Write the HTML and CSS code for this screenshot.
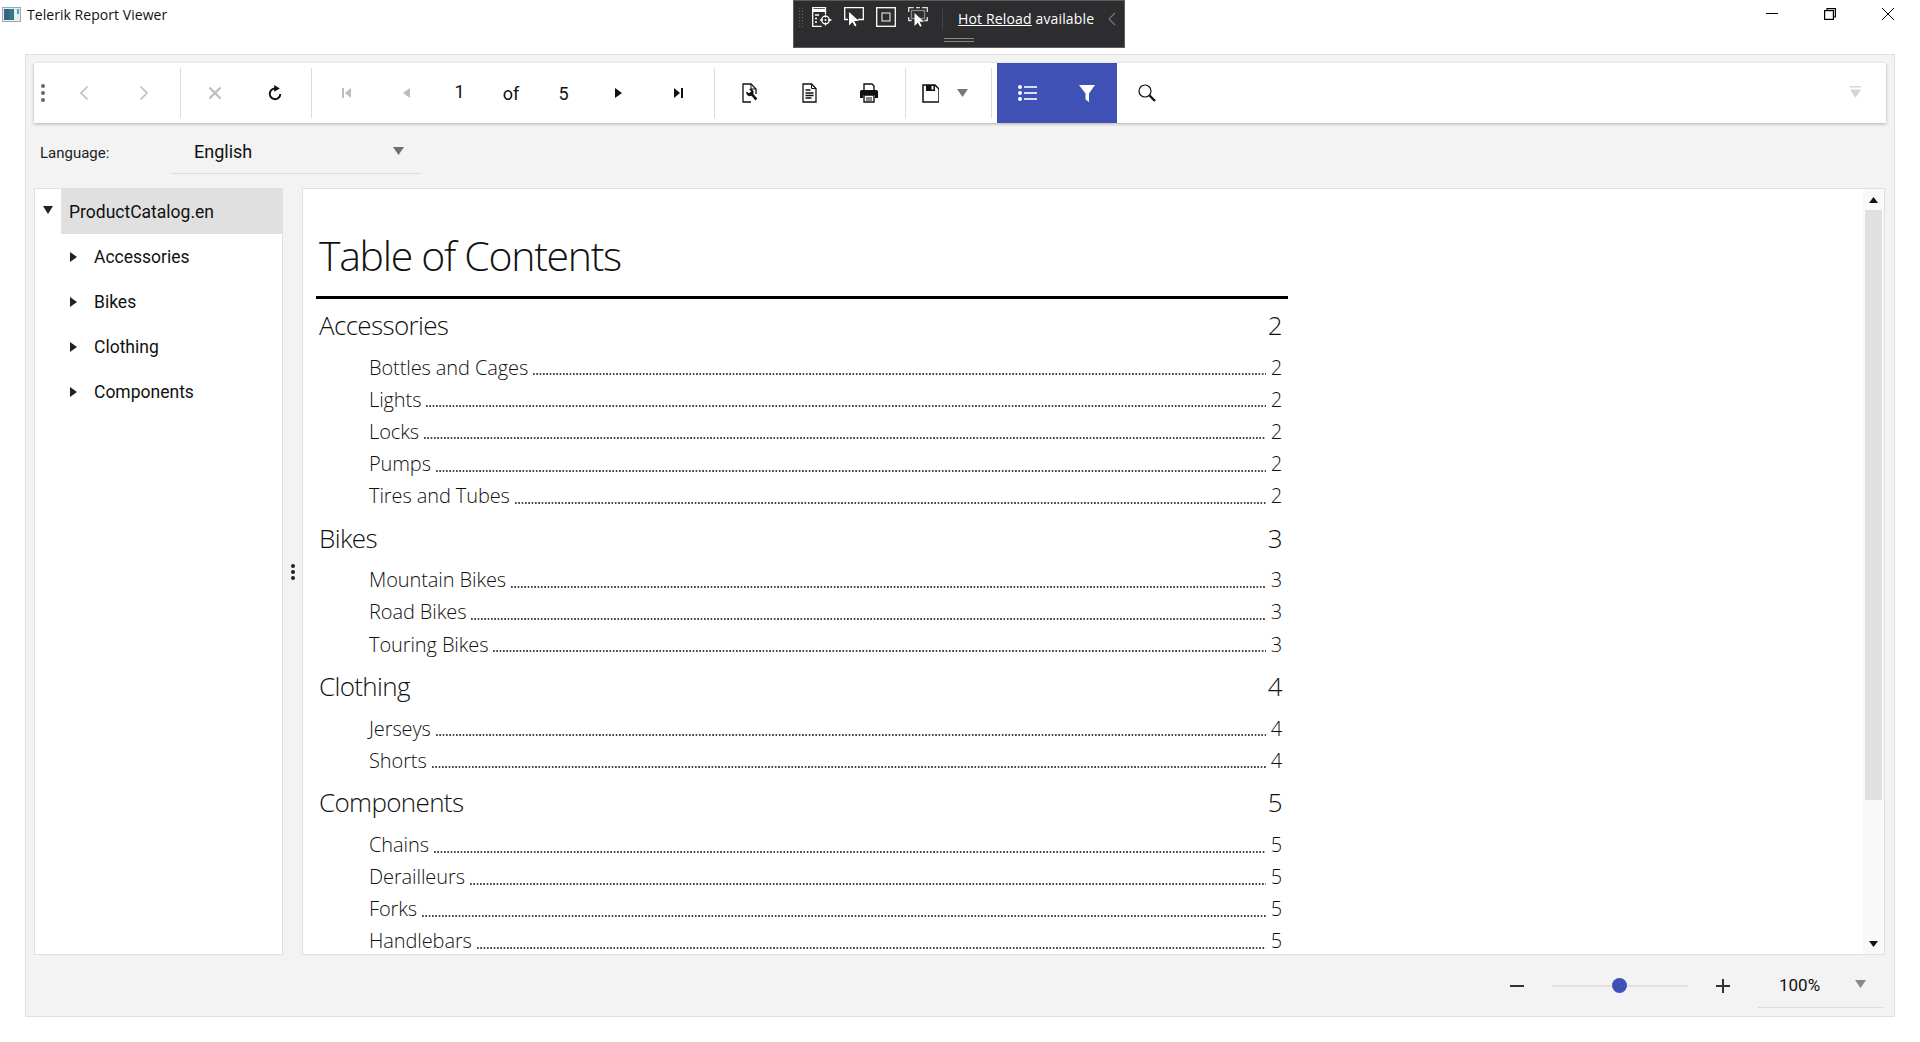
FILE: index.html
```html
<!DOCTYPE html>
<html lang="en">
<head>
<meta charset="utf-8">
<title>Telerik Report Viewer</title>
<link rel="stylesheet" href="styles.css">
</head>
<body>
<div class="app">
  <header class="titlebar">
    <svg class="app-icon" width="19" height="15" viewBox="0 0 19 15"><rect x=".5" y=".5" width="18" height="14" fill="#e8eef2" stroke="#9aa7b0"/><rect x="2" y="2" width="10" height="11" fill="#2f7d7a"/><rect x="2" y="2" width="5" height="11" fill="#3a5f8c"/><rect x="15" y="2" width="2" height="5" fill="#4aa3b8"/></svg>
    <span class="app-title">Telerik Report Viewer</span>
    <div class="hot-reload">
      <span class="hr-grip"></span>
      <svg class="hr-icon" width="20" height="20" viewBox="0 0 20 20" fill="none" stroke="#fff" stroke-width="1.3"><path d="M13.5 7V.7H.7v18.6h9"/><path d="M.7 3.5h12.8" stroke-width="3"/><path d="M3 8h4M3 11.5h2M3 15h2"/><circle cx="13.5" cy="13" r="3.8"/><circle cx="13.5" cy="13" r="1" fill="#fff" stroke="none"/><path d="M13.5 7.5v3M13.5 15.5v3M8 13h3M16 13h3.5"/></svg>
      <svg class="hr-icon" width="20" height="20" viewBox="0 0 20 20" fill="none" stroke="#fff" stroke-width="1.3"><path d="M4 12.5H.7V.7h18.6v11.8H14"/><path d="M5 5l0 13.5 3.5-3.5 2.5 4.5 1.5-1-2.3-4.5h4.8z" fill="#fff" stroke="none"/></svg>
      <svg class="hr-icon" width="20" height="20" viewBox="0 0 20 20" fill="none" stroke="#fff" stroke-width="1.3"><rect x=".7" y=".7" width="18.6" height="18.6"/><rect x="6" y="6" width="8" height="8" stroke="#ccc"/></svg>
      <svg class="hr-icon" width="20" height="20" viewBox="0 0 20 20" fill="none" stroke="#ddd" stroke-width="1.3"><path d="M.7 5V.7h5M14 .7h5.300V5M.7 10v3.500h3M19.300 10v3.500h-3M8 .7h4"/><rect x="3.500" y="3.500" width="13" height="8" stroke="#888"/><path d="M6.500 6l0 13 3.300-3.300 2.400 4 1.500-.9-2.200-4h4.500z" fill="#fff" stroke="none"/></svg>
      <span class="hr-sep"></span>
      <span class="hr-text"><u>Hot Reload</u> available</span>
      <svg class="hr-chevron" width="8" height="14" viewBox="0 0 8 14" fill="none" stroke="#777" stroke-width="1.2"><path d="M7 1L1 7l6 6"/></svg>
      <span class="hr-handle"></span>
    </div>
    <div class="win-controls">
      <svg width="12" height="12" viewBox="0 0 12 12" fill="none" stroke="#000"><path d="M0 5.500h12"/></svg>
      <svg width="12" height="12" viewBox="0 0 12 12" fill="none" stroke="#000" stroke-width="1.2"><rect x=".6" y="2.600" width="8.800" height="8.800"/><path d="M3 2.600V.6h8.400v8.400H9.400"/></svg>
      <svg width="12" height="12" viewBox="0 0 12 12" fill="none" stroke="#000"><path d="M0 0l12 12M12 0L0 12"/></svg>
    </div>
  </header>

  <main class="panel">
    <nav class="toolbar">
      <span class="tb-grip"><i></i><i></i><i></i></span>
      <span class="tb-btn"><svg width="10" height="16" viewBox="0 0 10 16" fill="none" stroke="#bdbdbd" stroke-width="1.6"><path d="M8.500 1.500L2 8l6.500 6.500"/></svg></span>
      <span class="tb-btn"><svg width="10" height="16" viewBox="0 0 10 16" fill="none" stroke="#bdbdbd" stroke-width="1.6"><path d="M1.500 1.500L8 8l-6.500 6.500"/></svg></span>
      <span class="tb-sep"></span>
      <span class="tb-btn"><svg width="14" height="14" viewBox="0 0 14 14" fill="none" stroke="#bdbdbd" stroke-width="2.2"><path d="M1.500 1.500l11 11M12.500 1.500l-11 11"/></svg></span>
      <span class="tb-btn"><svg width="14" height="16" viewBox="0 0 14 16" fill="none" stroke="#111" stroke-width="2"><path d="M9.500 4.200A5.300 5.300 0 1 0 12.300 9"/><path d="M6.200 0l5.600 3.600-5.600 3.200z" fill="#111" stroke="none"/></svg></span>
      <span class="tb-sep"></span>
      <span class="tb-btn"><svg width="9" height="10" viewBox="0 0 9 10" fill="#bdbdbd"><rect width="2" height="10"/><path d="M9 0v10L3 5z"/></svg></span>
      <span class="tb-btn"><svg width="7" height="10" viewBox="0 0 7 10" fill="#bdbdbd"><path d="M7 0v10L0 5z"/></svg></span>
      <span class="page-nav"><span class="pn-current">1</span><span>of</span><span>5</span></span>
      <span class="tb-btn"><svg width="7" height="10" viewBox="0 0 7 10" fill="#111"><path d="M0 0v10l7-5z"/></svg></span>
      <span class="tb-btn"><svg width="9" height="10" viewBox="0 0 9 10" fill="#111"><path d="M0 0v10l6-5z"/><rect x="7" width="2" height="10"/></svg></span>
      <span class="tb-sep"></span>
      <span class="tb-btn"><svg width="18" height="20" viewBox="-2 0 18 20" fill="none" stroke="#111" stroke-width="1.3"><path d="M9 19H1V1h8l5 5v5"/><path d="M9 1v5h5" stroke-width="1"/><path d="M4.500 8.500a3.600 3.600 0 0 0 5 4.300l4 4.600 1.800-1.800-4-4.600a3.600 3.600 0 0 0-4.300-5l2.300 2.300-2.200 2z" fill="#111" stroke="none"/></svg></span>
      <span class="tb-btn"><svg width="15" height="20" viewBox="0 0 15 20" fill="none" stroke="#111" stroke-width="1.3"><path d="M1 1h8.500L14 5.500V19H1z"/><path d="M9.500 1v4.500H14" stroke-width="1"/><path d="M3.500 7h5M3.500 10h8M3.500 12.500h8M3.500 15h6"/></svg></span>
      <span class="tb-btn"><svg width="18" height="20" viewBox="0 0 18 20" fill="none"><path d="M4 7V1h8l2 2v4" stroke="#111" stroke-width="1.400"/><path d="M0 8.500a1.500 1.500 0 0 1 1.500-1.500h15A1.500 1.500 0 0 1 18 8.500V15h-3v-3H3v3H0z" fill="#111"/><path d="M4 12h10v7H4z" stroke="#111" stroke-width="1.400"/><path d="M6 15h6M6 17h6" stroke="#111"/></svg></span>
      <span class="tb-sep"></span>
      <span class="tb-btn tb-save"><svg width="18" height="19" viewBox="-1 0 18 19" fill="none"><path d="M1 1h12l4 4v13H1z" stroke="#111" stroke-width="1.500"/><path d="M4 1h9v6H4z" fill="#111"/><rect x="9.500" y="2" width="2" height="3.500" fill="#fff"/></svg></span>
      <span class="tb-drop"><svg width="11" height="8" viewBox="0 0 11 8" fill="#777"><path d="M0 0h11L5.500 8z"/></svg></span>
      <span class="tb-sep tb-sep-wide"></span>
      <span class="tb-active">
        <span class="tb-btn"><svg width="19" height="16" viewBox="0 0 19 16" fill="#fff"><circle cx="2" cy="2" r="2"/><circle cx="2" cy="8" r="2"/><circle cx="2" cy="14" r="2"/><rect x="6" y="1.200" width="13" height="1.600"/><rect x="6" y="7.200" width="13" height="1.600"/><rect x="6" y="13.200" width="13" height="1.600"/></svg></span>
        <span class="tb-btn"><svg width="16" height="17" viewBox="0 0 16 17" fill="#fff"><path d="M0 0h16l-6 8.500V17l-3.500-2.500v-6z"/></svg></span>
      </span>
      <span class="tb-btn"><svg width="18" height="18" viewBox="0 0 18 18" fill="none" stroke="#111"><circle cx="7" cy="7" r="6" stroke-width="1.200"/><path d="M11.500 11.500l5.500 5.500" stroke-width="2.400"/></svg></span>
      <span class="tb-overflow"><svg width="11" height="12" viewBox="0 0 11 12" fill="#d5d5d5"><rect width="11" height="1.500"/><path d="M0 3.500h11L5.500 12z"/></svg></span>
    </nav>

    <div class="param-row">
      <label class="param-label">Language:</label>
      <div class="select"><span>English</span><svg width="11" height="8" viewBox="0 0 11 8" fill="#6f6f6f"><path d="M0 0h11L5.500 8z"/></svg></div>
    </div>

    <div class="workspace">
      <aside class="tree">
        <div class="tree-root"><span class="caret caret-root"><svg width="10" height="8" viewBox="0 0 10 8" fill="#222"><path d="M0 0h10L5 8z"/></svg></span><span class="tree-selected">ProductCatalog.en</span></div>
        <div class="tree-node"><span class="caret"><svg width="7" height="10" viewBox="0 0 7 10" fill="#222"><path d="M0 0v10l7-5z"/></svg></span><span class="tree-label">Accessories</span></div>
        <div class="tree-node"><span class="caret"><svg width="7" height="10" viewBox="0 0 7 10" fill="#222"><path d="M0 0v10l7-5z"/></svg></span><span class="tree-label">Bikes</span></div>
        <div class="tree-node"><span class="caret"><svg width="7" height="10" viewBox="0 0 7 10" fill="#222"><path d="M0 0v10l7-5z"/></svg></span><span class="tree-label">Clothing</span></div>
        <div class="tree-node"><span class="caret"><svg width="7" height="10" viewBox="0 0 7 10" fill="#222"><path d="M0 0v10l7-5z"/></svg></span><span class="tree-label">Components</span></div>
      </aside>
      <div class="splitter"><i></i><i></i><i></i></div>
      <section class="report">
        <div class="report-page">
          <div class="toc">
            <h1 class="toc-title">Table of Contents</h1>
            <div class="toc-section"><span>Accessories</span><span>2</span></div>
            <div class="toc-item"><span>Bottles and Cages</span><i></i><span>2</span></div>
            <div class="toc-item"><span>Lights</span><i></i><span>2</span></div>
            <div class="toc-item"><span>Locks</span><i></i><span>2</span></div>
            <div class="toc-item"><span>Pumps</span><i></i><span>2</span></div>
            <div class="toc-item"><span>Tires and Tubes</span><i></i><span>2</span></div>
            <div class="toc-section"><span>Bikes</span><span>3</span></div>
            <div class="toc-item"><span>Mountain Bikes</span><i></i><span>3</span></div>
            <div class="toc-item"><span>Road Bikes</span><i></i><span>3</span></div>
            <div class="toc-item"><span>Touring Bikes</span><i></i><span>3</span></div>
            <div class="toc-section"><span>Clothing</span><span>4</span></div>
            <div class="toc-item"><span>Jerseys</span><i></i><span>4</span></div>
            <div class="toc-item"><span>Shorts</span><i></i><span>4</span></div>
            <div class="toc-section"><span>Components</span><span>5</span></div>
            <div class="toc-item"><span>Chains</span><i></i><span>5</span></div>
            <div class="toc-item"><span>Derailleurs</span><i></i><span>5</span></div>
            <div class="toc-item"><span>Forks</span><i></i><span>5</span></div>
            <div class="toc-item"><span>Handlebars</span><i></i><span>5</span></div>
          </div>
        </div>
        <div class="scrollbar">
          <span class="sb-btn"><svg width="9" height="6" viewBox="0 0 9 6" fill="#111"><path d="M0 6h9L4.500 0z"/></svg></span>
          <span class="sb-thumb"></span>
          <span class="sb-space"></span>
          <span class="sb-btn"><svg width="9" height="6" viewBox="0 0 9 6" fill="#111"><path d="M0 0h9L4.500 6z"/></svg></span>
        </div>
      </section>
    </div>

    <footer class="zoombar">
      <svg class="zoom-btn" width="14" height="2" viewBox="0 0 14 2" fill="#333"><rect width="14" height="2"/></svg>
      <div class="slider"><span class="slider-thumb"></span></div>
      <svg class="zoom-btn" width="14" height="14" viewBox="0 0 14 14" fill="#333"><rect y="6" width="14" height="2"/><rect x="6" width="2" height="14"/></svg>
      <div class="zoom-select"><span>100%</span><svg width="11" height="8" viewBox="0 0 11 8" fill="#888"><path d="M0 0h11L5.500 8z"/></svg></div>
    </footer>
  </main>
</div>
</body>
</html>
```
FILE: styles.css
```css
* { box-sizing: border-box; }
html, body { margin: 0; height: 100%; }
body { background: #fff; color: #111; font-family: Roboto, "Liberation Sans", sans-serif; overflow: hidden; }
.app { display: flex; flex-direction: column; height: 1042px; padding-bottom: 25px; }

.titlebar { flex: none; height: 54px; display: flex; align-items: flex-start; position: relative; }
.app-icon { margin: 7px 0 0 2px; }
.app-title { margin: 5px 0 0 6px; font: 14px/20px "Open Sans", sans-serif; letter-spacing: .05px; color: #111; }
.hot-reload { position: absolute; left: 793px; top: 0; width: 332px; height: 48px; background: #2d2d30; border: 1px solid #5c5c5c; display: flex; align-items: flex-start; padding: 6px 0 0 4px; color: #fff; }
.hr-grip { width: 6px; height: 21px; margin-right: 8px; background-image: radial-gradient(#666 .8px, transparent 1px); background-size: 3px 3px; }
.hr-icon { margin-right: 12px; flex: none; }
.hr-sep { width: 1px; height: 20px; margin: 2px 15px 0 2px; background: #444; }
.hr-text { font: 14px/24px "Open Sans", sans-serif; letter-spacing: .15px; white-space: nowrap; }
.hr-chevron { margin: 5px 0 0 14px; }
.hr-handle { position: absolute; left: 150px; top: 37px; width: 30px; height: 4px; border-top: 1px solid #888; border-bottom: 1px solid #888; }
.win-controls { margin-left: auto; display: flex; gap: 46px; padding: 8px 26px 0 0; }

.panel { flex: 1; min-height: 0; margin: 0 25px; display: flex; flex-direction: column; padding: 8px 8px 0; background: #f3f3f3; border: 1px solid #e0e0e0; }

.toolbar { flex: none; height: 60px; display: flex; align-items: center; background: #fff; box-shadow: 0 1px 3px rgba(0,0,0,.28); }
.tb-grip { width: 18px; margin-right: 2px; display: flex; flex-direction: column; align-items: center; gap: 3px; }
.tb-grip i { width: 4px; height: 4px; border-radius: 50%; background: #666; }
.tb-btn { flex: none; width: 60px; height: 60px; display: flex; align-items: center; justify-content: center; }
.tb-save { width: 40px; }
.tb-drop { width: 24px; display: flex; justify-content: center; }
.tb-sep { flex: none; width: 1px; height: 50px; margin: 0 4px 0 6px; background: #dcdcdc; }
.tb-sep-wide { margin: 0 5px 0 17px; }
.tb-active { display: flex; background: #3f51b5; }
.tb-overflow { margin-left: auto; margin-right: 25px; display: flex; margin-top: -2px; }
.page-nav { flex: none; width: 152px; display: grid; grid-template-columns: 47px 56px 49px; justify-items: center; font-size: 18px; color: #111; }
.pn-current { margin-top: -2px; }

.param-row { flex: none; display: flex; align-items: center; height: 41px; margin: 10px 0 14px; }
.param-label { width: 137px; padding: 0 0 2px 6px; font-size: 15px; color: #222; }
.select { width: 250px; height: 41px; display: flex; align-items: center; justify-content: space-between; padding: 0 17px 3px 23px; border-bottom: 1px solid #dcdcdc; font-size: 18px; color: #111; }
.select svg { margin-top: -1px; }

.workspace { flex: 1; min-height: 0; display: flex; margin-right: 1px; }
.tree { flex: none; width: 249px; background: #fff; border: 1px solid #e0e0e0; }
.tree-root, .tree-node { display: flex; height: 45px; align-items: center; font-size: 17.5px; color: #111; }
.tree-node { padding-left: 26px; }
.caret { flex: none; width: 26px; display: flex; justify-content: center; }
.caret-root { margin-top: -3px; }
.tree-node .caret { width: 25px; }
.tree-selected { flex: 1; height: 100%; display: flex; align-items: center; padding-left: 8px; background: #e0e0e0; }
.tree-label { padding-left: 8px; }

.splitter { flex: none; width: 19px; display: flex; flex-direction: column; align-items: center; justify-content: center; gap: 2px; }
.splitter i { width: 4px; height: 4px; border-radius: 50%; background: #222; }

.report { flex: 1; min-width: 0; display: flex; background: #fff; border: 1px solid #e0e0e0; }
.report-page { flex: 1; min-width: 0; overflow: hidden; padding-left: 13px; }
.toc { width: 972px; font-family: "Open Sans", sans-serif; font-weight: 300; color: #111; }
.toc-title { margin: 0; height: 110px; padding: 42px 0 0 3px; border-bottom: 3px solid #000; font-size: 41px; line-height: 48px; font-weight: 300; letter-spacing: -1.3px; white-space: nowrap; }
.toc-section { height: 52px; display: flex; align-items: center; justify-content: space-between; padding: 0 6px 0 3px; font-size: 26px; letter-spacing: -.65px; }
.toc-item { height: 32.15px; display: flex; align-items: center; padding: 0 6px 0 53px; font-size: 20px; letter-spacing: -.1px; }
.toc-item i { flex: 1; align-self: flex-end; height: 2px; margin: 0 5px 8px 5px; background-image: linear-gradient(90deg, #444450 2px, transparent 2px); background-size: 3.33px 2px; }

.scrollbar { flex: none; width: 21px; display: flex; flex-direction: column; background: #f9f9f9; }
.sb-btn { flex: none; height: 21px; display: flex; align-items: center; justify-content: center; }
.sb-thumb { flex: none; height: 590px; margin: 0 2px; background: #e0e0e0; }
.sb-space { flex: 1; }

.zoombar { flex: none; height: 61px; display: flex; align-items: center; justify-content: flex-end; gap: 28px; padding-right: 3px; }
.zoom-btn { flex: none; }
.slider { width: 136px; height: 2px; background: #e0e0e0; position: relative; }
.slider-thumb { position: absolute; left: 60px; top: -7px; width: 15px; height: 15px; border-radius: 50%; background: #3f51b5; }
.zoom-select { width: 125px; height: 42px; margin-top: 2px; display: flex; align-items: center; justify-content: space-between; padding: 0 17px 2px 21px; border-bottom: 1px solid #dcdcdc; font-size: 17px; color: #111; }
.zoom-select svg { margin-top: -2px; }
```
